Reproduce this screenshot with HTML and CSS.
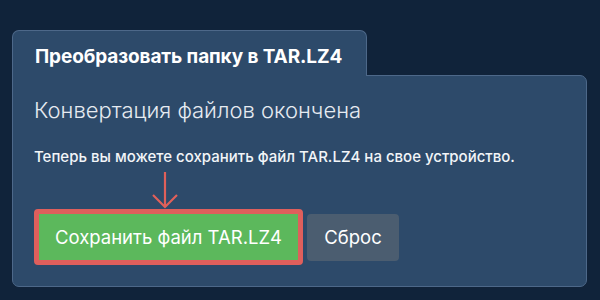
FILE: index.html
```html
<!DOCTYPE html>
<html lang="ru">
<head>
  <meta charset="UTF-8" />
  <title>Преобразовать папку в TAR.LZ4</title>
  <link rel="stylesheet" href="styles.css">
</head>
<body>

  <div class="tab">Преобразовать папку в TAR.LZ4</div>
  <div class="panel">
    <h2>Конвертация файлов окончена</h2>
    <p>Теперь вы можете сохранить файл TAR.LZ4 на свое устройство.</p>

    <div class="pointer">
      <svg width="28" height="38" viewBox="0 0 28 38">
        <path d="M14 1 V35 M2 24 L14 36 L26 24" fill="none" stroke="#e0605a" stroke-width="2.2"/>
      </svg>
    </div>

    <div class="actions">
      <div class="highlight">
        <button class="btn btn-save">Сохранить файл TAR.LZ4</button>
      </div>
      <button class="btn btn-reset">Сброс</button>
    </div>
  </div>

</body>
</html>
```

FILE: styles.css
```css
body {
  margin: 0;
  padding: 30px 12px 0;
  background-color: #10233a;
  font-family: Inter, "Noto Sans", sans-serif;
  color: #ffffff;
}
.tab {
  display: inline-block;
  position: relative;
  z-index: 1;
  width: 309px;
  height: 45px;
  padding: 0 22px;
  line-height: 52px;
  font-size: 19px;
  font-weight: 700;
  letter-spacing: -0.1px;
  white-space: nowrap;
  background-color: #2d4a6a;
  border: 1px solid #4d6889;
  border-bottom: none;
  border-radius: 7px 7px 0 0;
  margin-bottom: -1px;
}
.panel {
  width: 531px;
  height: 190px;
  padding: 20px 21px 0;
  background-color: #2d4a6a;
  border: 1px solid #4d6889;
  border-radius: 0 7px 7px 7px;
}
h2 {
  margin: 0;
  font-size: 22px;
  font-weight: 300;
  line-height: 28px;
  color: #e6ebf1;
}
p {
  margin: 24px 0 0;
  font-size: 15px;
  font-weight: 500;
  line-height: 18px;
  color: #f2f5f8;
}
.pointer {
  margin: 5px 0 0 117px;
  height: 38px;
}
.pointer svg {
  display: block;
}
.actions {
  display: flex;
  align-items: center;
  gap: 4px;
}
.highlight {
  border: 5px solid #df5f5c;
  border-radius: 4px;
}
.btn {
  border: none;
  font-family: Inter, "Noto Sans", sans-serif;
  font-size: 18.5px;
  color: #ffffff;
  cursor: pointer;
}
.btn-save {
  display: block;
  width: 259px;
  height: 46px;
  background-color: #5cb85c;
}
.btn-reset {
  width: 92px;
  height: 47px;
  background-color: #4b5d70;
  border-radius: 4px;
}
```
